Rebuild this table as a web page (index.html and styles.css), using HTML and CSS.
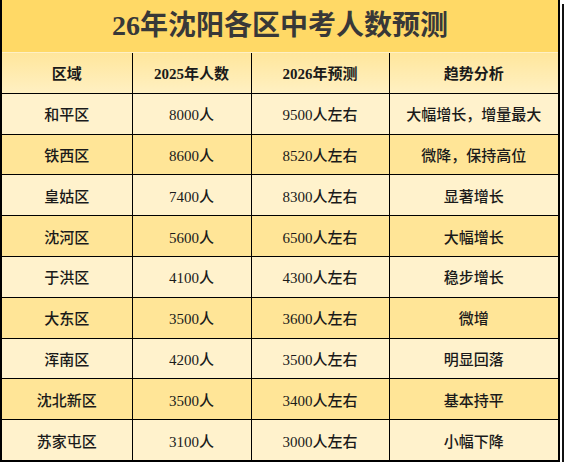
FILE: index.html
```html
<!DOCTYPE html>
<html lang="zh-CN">
<head>
    <meta charset="UTF-8">
    <title>26年沈阳各区中考人数预测</title>
    <link rel="stylesheet" href="styles.css">
</head>
<body>
    <div class="sheet">
        <div class="title">26年沈阳各区中考人数预测</div>
        <table class="forecast">
            <colgroup>
                <col class="c-area">
                <col class="c-2025">
                <col class="c-2026">
                <col class="c-trend">
            </colgroup>
            <thead>
                <tr>
                    <th>区域</th>
                    <th>2025年人数</th>
                    <th>2026年预测</th>
                    <th>趋势分析</th>
                </tr>
            </thead>
            <tbody>
                <tr><td>和平区</td><td>8000人</td><td>9500人左右</td><td>大幅增长，增量最大</td></tr>
                <tr><td>铁西区</td><td>8600人</td><td>8520人左右</td><td>微降，保持高位</td></tr>
                <tr><td>皇姑区</td><td>7400人</td><td>8300人左右</td><td>显著增长</td></tr>
                <tr><td>沈河区</td><td>5600人</td><td>6500人左右</td><td>大幅增长</td></tr>
                <tr><td>于洪区</td><td>4100人</td><td>4300人左右</td><td>稳步增长</td></tr>
                <tr><td>大东区</td><td>3500人</td><td>3600人左右</td><td>微增</td></tr>
                <tr><td>浑南区</td><td>4200人</td><td>3500人左右</td><td>明显回落</td></tr>
                <tr><td>沈北新区</td><td>3500人</td><td>3400人左右</td><td>基本持平</td></tr>
                <tr><td>苏家屯区</td><td>3100人</td><td>3000人左右</td><td>小幅下降</td></tr>
            </tbody>
        </table>
    </div>
</body>
</html>
```

FILE: styles.css
```css
body {
    margin: 0;
    background: #fff;
    font-family: "Liberation Serif", "Noto Sans CJK SC", serif;
    color: #1a1a1a;
}
.sheet {
    width: 556px;
    border-left: 2px solid #000;
    border-right: 2px solid #000;
    border-bottom: 2px solid #000;
    box-shadow: 2px 2px 0 #fff, 4px 4px 0 #111;
}
.title {
    height: 52px;
    line-height: 52px;
    text-align: center;
    font-size: 28px;
    font-weight: bold;
    color: #383838;
    background: #ffd966;
    border-bottom: 1px solid #fff0c4;
}
.forecast {
    width: 100%;
    border-collapse: collapse;
    table-layout: fixed;
}
.c-area { width: 130px; }
.c-2025 { width: 119px; }
.c-2026 { width: 138px; }
.forecast th,
.forecast td {
    height: 39.8px;
    padding: 0;
    text-align: center;
    font-size: 15px;
    border: 1.5px solid #000;
}
.forecast td { font-weight: 500; }
.forecast tr > :first-child { border-left: none; }
.forecast tr > :last-child { border-right: none; }
.forecast thead th {
    border-top: none;
    font-weight: bold;
    background: linear-gradient(#ffe69c, #fff0c2);
}
.forecast tbody tr:last-child td { border-bottom: none; }
.forecast tbody tr:nth-child(odd) td { background: #fff2cc; }
.forecast tbody tr:nth-child(even) td { background: #ffe597; }
```
